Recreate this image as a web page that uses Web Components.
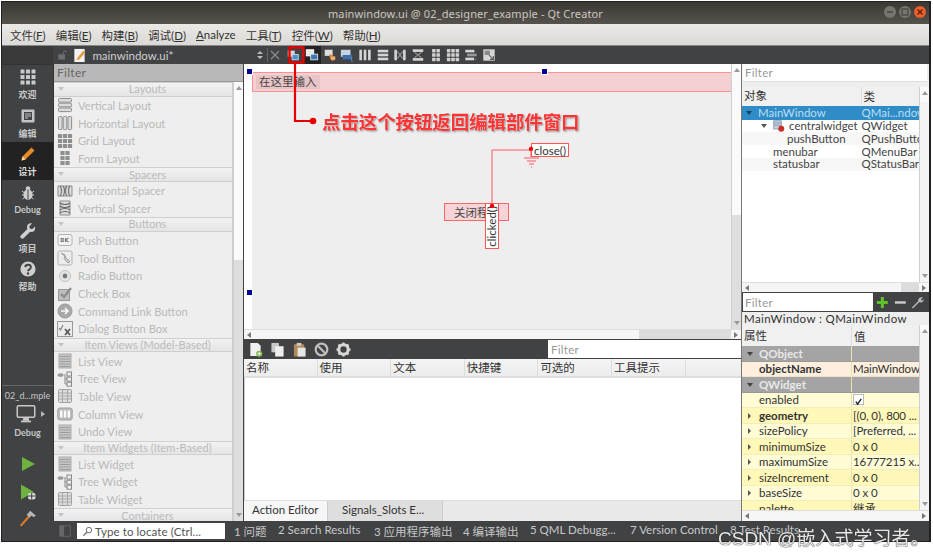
<!DOCTYPE html>
<html lang="zh"><head><meta charset="utf-8"><title>Qt Creator</title>
<style>
html,body{margin:0;padding:0;background:#fff;width:933px;height:558px;overflow:hidden}
body{font-family:"Lato","Noto Sans CJK SC",sans-serif;font-size:12px;color:#333}
</style></head><body>
<qt-window>
  <qt-titlebar slot="title">mainwindow.ui @ 02_designer_example - Qt Creator</qt-titlebar>
  <qt-menubar slot="menu"></qt-menubar>
  <qt-toolbar slot="tools"></qt-toolbar>
  <qt-modebar slot="modes"></qt-modebar>
  <widget-box slot="left"></widget-box>
  <form-editor slot="center"></form-editor>
  <action-editor slot="center"></action-editor>
  <object-inspector slot="right"></object-inspector>
  <property-editor slot="right"></property-editor>
  <qt-status slot="status"></qt-status>
  <qt-annotation slot="over"></qt-annotation>
</qt-window>
<csdn-mark>CSDN @嵌入式学习者。</csdn-mark>
<script>
const S=(vb,body)=>`<svg xmlns="http://www.w3.org/2000/svg" viewBox="0 0 ${vb} ${vb}" width="100%" height="100%">${body}</svg>`;
const g='#a9a9a9',d='#8e8e8e',l='#dcdcdc';
const dots=(xs,ys,c,r=1.6)=>xs.flatMap(x=>ys.map(y=>`<rect x="${x-r}" y="${y-r}" width="${2*r}" height="${2*r}" rx=".6" fill="${c}"/>`)).join('');
const I={
 vlayout:S(16,`<g fill="${l}" stroke="${d}"><rect x="1.5" y="1.5" width="13" height="3.6" rx="1"/><rect x="1.5" y="6.2" width="13" height="3.6" rx="1"/><rect x="1.5" y="11" width="13" height="3.6" rx="1"/></g>`),
 hlayout:S(16,`<g fill="${l}" stroke="${d}"><rect x="1.5" y="1.5" width="3.6" height="13" rx="1"/><rect x="6.2" y="1.5" width="3.6" height="13" rx="1"/><rect x="11" y="1.5" width="3.6" height="13" rx="1"/></g>`),
 grid:S(16,dots([3,8,13],[3,8,13],d,2.1)),
 form:S(16,dots([5.5,10.5],[3,8,13],d,2.1)),
 hspacer:S(16,`<path d="M1 3h14v10H1z" fill="${l}" stroke="${d}"/><path d="M3 3c2 2 2 8 0 10M6 3c2 2 2 8 0 10M10 3c-2 2-2 8 0 10M13 3c-2 2-2 8 0 10" fill="none" stroke="#777" stroke-width="1.2"/>`),
 vspacer:S(16,`<path d="M3 1h10v14H3z" fill="${l}" stroke="${d}"/><path d="M3 3c2 2 8 2 10 0M3 6c2 2 8 2 10 0M3 10c2-2 8-2 10 0M3 13c2-2 8-2 10 0" fill="none" stroke="#666" stroke-width="1.2"/>`),
 ok:S(16,`<rect x="1" y="2.5" width="14" height="11" rx="2" fill="#f2f2f2" stroke="#b2b2b2"/><path d="M4.2 6.5h2v3h-2zM8.5 6v4M11.5 6l-3 2 3 2" fill="none" stroke="#777" stroke-width="1.1"/>`),
 tool:S(16,`<rect x="1" y="1" width="14" height="14" rx="1.5" fill="#ececec" stroke="#b2b2b2"/><path d="M5 3.5l3 3-1 2 4 4.5 2-1.5-4.5-4-1-3-3-1z" fill="#cfcfcf" stroke="#888" stroke-width=".8"/>`),
 radio:S(16,`<circle cx="8" cy="8" r="5.5" fill="#e6e6e6" stroke="#c0c0c0"/><circle cx="8" cy="8" r="2.4" fill="#777"/>`),
 check:S(16,`<rect x="1.5" y="3.5" width="11" height="11" fill="#bdbdbd" stroke="#999"/><path d="M4 8l3 3 7-9" fill="none" stroke="#8c8c8c" stroke-width="2.2"/>`),
 cmd:S(16,`<circle cx="8" cy="8" r="7" fill="#a8a8a8" stroke="#999"/><path d="M4 8h6M8 5l3 3-3 3" fill="none" stroke="#fafafa" stroke-width="1.5"/>`),
 dialog:S(16,`<rect x=".5" y=".5" width="15" height="15" fill="#ececec" stroke="#999"/><path d="M2 7l1.5 2L6 4" fill="none" stroke="#888" stroke-width="1.2"/><path d="M8 8l5 6M13 8l-5 6" stroke="#555" stroke-width="1.7"/>`),
 list:S(16,`<rect x="2" y="1" width="12" height="14" fill="#c6c6c6" stroke="#aaa"/><path d="M3 3.5h10M3 6h10M3 8.5h10M3 11h10M3 13.5h10" stroke="#9c9c9c"/>`),
 tree:S(16,`<ellipse cx="3.5" cy="4" rx="3" ry="1.8" fill="#999"/><rect x="10" y="1" width="4.5" height="4" fill="#eee" stroke="#888"/><rect x="10" y="6.2" width="4.5" height="4" fill="#eee" stroke="#888"/><rect x="10" y="11.2" width="4.5" height="4" fill="#eee" stroke="#888"/><path d="M8 3v10h2M8 8h2" fill="none" stroke="#888"/>`),
 table:S(16,`<rect x="1.5" y="1.5" width="13" height="13" rx="1" fill="#ddd" stroke="#a0a0a0"/><path d="M1.5 5h13M1.5 8h13M1.5 11h13M5.5 1.5v13M10.5 1.5v13" stroke="#a8a8a8"/>`),
 column:S(16,`<rect x=".8" y="2" width="14.4" height="12" rx="2" fill="#bbb" stroke="#a0a0a0"/><rect x="3" y="4.5" width="2.4" height="7" fill="#fafafa"/><rect x="6.8" y="4.5" width="2.4" height="7" fill="#fafafa"/><rect x="10.6" y="4.5" width="2.4" height="7" fill="#fafafa"/>`),
 welcome:S(16,dots([2.5,8,13.5],[2.5,8,13.5],'#c9c9c9',2)),
 edit:S(16,`<rect x="1.5" y="1.5" width="13" height="13" rx="1" fill="#c4c4c4"/><rect x="4" y="4" width="8" height="8" fill="#444"/><path d="M5 6h6M5 8h6M5 10h3" stroke="#c4c4c4"/>`),
 design:S(16,`<path d="M1.5 14.5l1-4L11.5 1.5l3 3-9 9z" fill="#e8892a"/><path d="M1.5 14.5l1-4 3 3z" fill="#f5d4a8"/>`),
 bug:S(16,`<ellipse cx="8" cy="9.5" rx="4.5" ry="5.2" fill="#cfcfcf"/><circle cx="8" cy="3.5" r="2.2" fill="#cfcfcf"/><path d="M8 4.500v10" stroke="#404244"/><path d="M2 6l2.500 2M14 6l-2.500 2M2 10h2.500M14 10h-2.500M2.500 14l2.500-2M13.500 14l-2.500-2" stroke="#cfcfcf" stroke-width="1"/>`),
 wrench:S(16,`<path d="M15 3.6l-2.8 2.6-2.3-.6-.6-2.3L12 .4C9.500-.4 6.800 1.400 7 4.200c0 .7.200 1.200.4 1.700L1 12.200c-1 1-1 2 0 2.900s1.900.9 2.800 0l6.400-6.400c3 1 5.600-1.500 4.800-5.100z" fill="#cfcfcf"/>`),
 help:S(16,`<circle cx="8" cy="8" r="7.6" fill="#cfcfcf"/><path d="M5.200 6.200C5.400 4.600 6.600 3.800 8 3.800c1.700 0 2.900 1 2.900 2.400 0 2.100-2.900 2.200-2.900 4.100" fill="none" stroke="#404244" stroke-width="1.900"/><circle cx="8" cy="12.500" r="1.200" fill="#404244"/>`),
 monitor:S(24,`<rect x="1.500" y="2" width="21" height="14" rx="1.500" fill="#444" stroke="#c8c8c8" stroke-width="1.800"/><path d="M9 16h6l1 4H8z" fill="#c8c8c8"/><rect x="6" y="20" width="12" height="2" fill="#c8c8c8"/>`),
 play:S(16,`<path d="M2 1l13 7-13 7z" fill="#6fb33f"/>`),
 dplay:S(16,`<path d="M1 .5l13 7.500-13 7.500z" fill="#6fb33f"/><rect x="8" y="9" width="7.500" height="6.500" rx="2" fill="#dcdcdc"/><path d="M11.700 9v6.500M8 12h7.500" stroke="#404244"/>`),
 hammer:S(16,`<path d="M1.500 15L9 6.500" stroke="#d97a24" stroke-width="2"/><path d="M6.800 5L10 1.500l5 4.500-2 1-2-1-1.500 1.500z" fill="#b6b6b6"/>`),
 lock:S(16,`<rect x="3" y="7" width="9" height="7" fill="#6e6e6e"/><path d="M10 7V4.500c0-2.500 3.500-2.500 3.500 0" fill="none" stroke="#6e6e6e" stroke-width="1.300"/>`),
 doc:S(16,`<path d="M2.500 1h11v14h-11z" fill="#f2f2f2"/><path d="M5 13l1-3 6-7 2 2-6 7z" fill="#e89a3c"/>`),
 sort:S(10,`<path d="M5 1l3 3H2zM5 9L2 6h6z" fill="#bcbcbc"/>`),
 x:S(12,`<path d="M2 2l8 8M10 2l-8 8" stroke="#8f8f8f" stroke-width="1.100"/>`),
 t1:S(16,`<rect x="2" y="3" width="8" height="7" fill="#d6d6d6"/><rect x="7" y="7.500" width="7" height="6" fill="#4d8fd0" stroke="#cfdcec"/>`),
 t2:S(16,`<rect x="1.500" y="2" width="8.500" height="7" fill="#e8e8e8" stroke="#fff"/><rect x="6.500" y="7" width="8" height="6.500" fill="#3f78b5" stroke="#e0e8f0"/>`),
 t3:S(16,`<rect x="2" y="2" width="9" height="7" fill="#ddd"/><path d="M7 7l3 1 1 3 3 1-3 3-3-3z" fill="#e87a2c"/><rect x="9" y="9.500" width="5" height="4" fill="#f0b070"/>`),
 t4:S(16,`<rect x="1" y="2" width="11" height="8" fill="#c6d3e3"/><rect x="3" y="8" width="11" height="5" fill="#3f6ea8"/><path d="M13 10v5h2" stroke="#4d8fd0" fill="none"/>`),
 t5:S(16,`<rect x="1.500" y="2" width="3" height="12" fill="#d5d5d5"/><rect x="6.500" y="2" width="3" height="12" fill="#d5d5d5"/><rect x="11.500" y="2" width="3" height="12" fill="#d5d5d5"/>`),
 t6:S(16,`<rect x="2" y="2" width="12" height="3" fill="#d5d5d5"/><rect x="2" y="6.500" width="12" height="3" fill="#d5d5d5"/><rect x="2" y="11" width="12" height="3" fill="#d5d5d5"/>`),
 t7:S(16,`<rect x="1.500" y="2" width="3" height="12" fill="#d5d5d5"/><rect x="11.500" y="2" width="3" height="12" fill="#d5d5d5"/><path d="M5 4l3 4-3 4M11 4L8 8l3 4" fill="none" stroke="#999" stroke-width="1.300"/>`),
 t8:S(16,`<rect x="2" y="1.500" width="12" height="3" fill="#d5d5d5"/><rect x="2" y="11.500" width="12" height="3" fill="#d5d5d5"/><path d="M4 5l4 3 4-3M4 11l4-3 4 3" fill="none" stroke="#999" stroke-width="1.300"/>`),
 t9:S(16,dots([5.500,10.500],[3,8,13],'#d0d0d0',2)),
 t10:S(16,dots([3,8,13],[3,8,13],'#d0d0d0',2)),
 t11:S(16,`<rect x="1.500" y="2" width="10" height="3" fill="#d5d5d5"/><rect x="3.500" y="6.500" width="11" height="3" fill="#999"/><rect x="1.500" y="11" width="10" height="3" fill="#d5d5d5"/><path d="M12 3v2M14 12l-2 2" stroke="#999"/>`),
 t12:S(16,`<rect x="1.500" y="1.500" width="13" height="13" fill="#d5d5d5"/><path d="M8 8l5 5M13 9v4H9" fill="none" stroke="#555" stroke-width="1.200"/><rect x="3" y="3" width="6" height="5" fill="#888"/>`),
 a1:S(16,`<path d="M2.500 1h8l3 3v11h-11z" fill="#f0f0f0"/><circle cx="12" cy="12.500" r="3.300" fill="#7ab648"/><path d="M12 10.500v4M10 12.500h4" stroke="#fff"/>`),
 a2:S(16,`<rect x="1.500" y="1" width="8" height="10" fill="#c8c8c8"/><rect x="5.500" y="4.500" width="9" height="11" fill="#eee"/>`),
 a3:S(16,`<rect x="2" y="2.500" width="11" height="13" rx="1" fill="#b08a58"/><rect x="5" y="1" width="5" height="3" fill="#ccc"/><rect x="6" y="6" width="8.500" height="9.500" fill="#e6e6e6"/>`),
 a4:S(16,`<circle cx="8" cy="8" r="6.200" fill="none" stroke="#bdbdbd" stroke-width="2.400"/><path d="M3.800 3.800l8.400 8.400" stroke="#bdbdbd" stroke-width="2.400"/>`),
 a5:S(16,`<circle cx="8" cy="8" r="5" fill="none" stroke="#d8d8d8" stroke-width="3.200"/><path d="M8 .5v3M8 12.500v3M.5 8h3M12.500 8h3M2.700 2.700l2 2M11.300 11.300l2 2M13.300 2.700l-2 2M4.700 11.300l-2 2" stroke="#d8d8d8" stroke-width="2.400"/>`),
 sidebar:S(16,`<rect x="2" y="2" width="12" height="12" fill="none" stroke="#666"/><rect x="2" y="2" width="5" height="12" fill="#666"/>`),
 search:S(16,`<circle cx="10" cy="6" r="4" fill="none" stroke="#666" stroke-width="1.400"/><path d="M7 9l-5 5" stroke="#666" stroke-width="1.800"/>`),
 widget:S(16,`<rect x="1" y="1" width="10" height="11" fill="#c3d0de" stroke="#7b8da0"/><path d="M1 4h10M1 7h10" stroke="#7b8da0"/><circle cx="11" cy="11.500" r="4" fill="#c9302c"/>`),
 plus:S(14,`<path d="M7 1v12M1 7h12" stroke="#5fc22a" stroke-width="3.400"/>`),
 minus:S(14,`<path d="M1 7h12" stroke="#cfcfcf" stroke-width="2.600"/>`),
 tools:S(14,`<path d="M1.500 13L9 5.500" stroke="#b8b8b8" stroke-width="1.600"/><path d="M8 6c-1-3 2-5.500 5-4.500L11 4l1 1 2-1.500C14.500 6.500 11 8 8 6z" fill="#b8b8b8"/>`)
};
function def(name,css,html){
  customElements.define(name,class extends HTMLElement{
    connectedCallback(){
      if(this.shadowRoot)return;
      const r=this.attachShadow({mode:'open'});
      const a=k=>this.getAttribute(k)||'';
      r.innerHTML=`<style>${css}</style>`+(typeof html==='function'?html(a,this):html);
    }
  });
}
const cjk='"Noto Sans CJK SC"';
def('qt-window',`:host{display:block;width:930px;height:541px;margin:1px 0 0 1px;box-sizing:border-box;filter:blur(.45px);position:relative}
 .w{width:100%;height:100%;display:flex;flex-direction:column;border:1px solid #24201f;border-right-width:2px;box-sizing:border-box;background:#404244;border-bottom-width:1px}
 .mid{flex:1;display:flex;min-height:0}
 .col{display:flex;flex-direction:column;min-height:0}
 .c{width:498px;border-left:1px solid #404244;box-sizing:border-box;background:#eee}
 .r{flex:1;background:#eee;border-left:1px solid #777;min-width:0}`,
 `<div class="w"><slot name="title"></slot><slot name="menu"></slot><slot name="tools"></slot>
  <div class="mid"><slot name="modes"></slot><slot name="left"></slot><div class="col c"><slot name="center"></slot></div><div class="col r"><slot name="right"></slot></div></div>
  <slot name="status"></slot></div><slot name="over"></slot>`);
def('qt-titlebar',`:host{display:flex;height:22px;align-items:center;justify-content:center;background:linear-gradient(#3b3834,#56524c);color:#c9c7c2;font-size:11px;letter-spacing:.12px;position:relative;font-family:"Noto Sans",sans-serif}
 .b{position:absolute;right:3px;top:4px;display:flex;gap:3px}
 i{width:12px;height:12px;border-radius:50%;background:#77756f;display:flex;align-items:center;justify-content:center}
 i.x{background:#e9602c}
 i svg{width:8px;height:8px}`,
 `<slot></slot><div class="b"><i><svg viewBox="0 0 8 8"><path d="M1 4h6" stroke="#3c3a37" stroke-width="1.200"/></svg></i><i><svg viewBox="0 0 8 8"><rect x="1" y="1" width="6" height="6" fill="none" stroke="#3c3a37"/></svg></i><i class="x"><svg viewBox="0 0 8 8"><path d="M1.500 1.500l5 5M6.500 1.500l-5 5" stroke="#5a1a05" stroke-width="1.200"/></svg></i></div>`);
def('qt-menubar',`:host{display:flex;height:22px;align-items:center;gap:10px;padding:0 0 0 8px;background:linear-gradient(#ebe9e6,#dcdad6);border-bottom:1px solid #888;box-sizing:border-box;color:#333;font-size:11.5px}
 u{text-decoration:underline}`,
 `<span>文件(<u>F</u>)</span><span>编辑(<u>E</u>)</span><span>构建(<u>B</u>)</span><span>调试(<u>D</u>)</span><span><u>A</u>nalyze</span><span>工具(<u>T</u>)</span><span>控件(<u>W</u>)</span><span>帮助(<u>H</u>)</span>`);
def('tool-ico',`:host{display:flex;width:17.7px;height:18px;align-items:center;justify-content:center;flex:none}
 div{width:var(--s,14px);height:var(--s,14px)}
 :host([on]){background:#222}`,a=>`<div>${I[a('i')]}</div>`);
def('qt-toolbar',`:host{display:flex;height:18px;background:#404244;align-items:center;color:#d0d0d0;font-size:11.5px}
 .m{width:51px;height:100%;flex:none;background:#3a3a3a}
 .n{width:166px;flex:none;padding-left:4px;box-sizing:border-box}
 .sep{width:1px;height:14px;background:#666;margin:0 1px 0 1px}
 .sq{display:flex;width:12px;justify-content:center}
 .sq svg{width:10px;height:10px}
 .ic{display:flex;margin-left:3px}`,
 `<div class="m"></div><tool-ico i="lock" style="--s:12px"></tool-ico><tool-ico i="doc" style="--s:15px"></tool-ico><span class="n">mainwindow.ui*</span>
  <span class="sq">${I.sort}</span><span class="sep"></span><tool-ico i="x" style="--s:12px;width:12px"></tool-ico>
  <div class="ic"><tool-ico i="t1"></tool-ico><tool-ico i="t2" on style="margin-left:1px"></tool-ico><tool-ico i="t3"></tool-ico><tool-ico i="t4"></tool-ico><tool-ico i="t5"></tool-ico><tool-ico i="t6"></tool-ico><tool-ico i="t7"></tool-ico><tool-ico i="t8"></tool-ico><tool-ico i="t9"></tool-ico><tool-ico i="t10"></tool-ico><tool-ico i="t11"></tool-ico><tool-ico i="t12"></tool-ico></div>`);
def('mode-item',`:host{display:flex;flex-direction:column;align-items:center;height:38.400px;justify-content:center;gap:3px;padding-top:2px;box-sizing:border-box;color:#c8c8c8;font-size:9px;font-weight:700;flex:none}
 :host([on]){background:#222;color:#ddd}
 div{width:16px;height:16px}`,a=>`<div>${I[a('i')]}</div><slot></slot>`);
def('qt-modebar',`:host{display:flex;flex-direction:column;width:51px;flex:none;background:#404244;box-sizing:border-box;border-top:1px solid #333;position:relative;z-index:1}
 .sp{flex:1}
 .kit{border-top:1px solid #666;height:65px;box-sizing:border-box;display:flex;flex-direction:column;align-items:center;color:#c8c8c8;font-size:9px;padding-top:3px;line-height:13px;flex:none}
 .mon{display:flex;align-items:center;height:24px;margin:0 0 0 8px;gap:5px}.mon span{display:block;width:20px;height:22px}
 .tri{width:0;height:0;border:3px solid transparent;border-left:4px solid #bbb}
 .run{display:flex;justify-content:center;align-items:center;flex:none;height:28px}
 .run span{display:block;width:16px;height:16px}
 b{font-weight:700}`,
 `<mode-item i="welcome">欢迎</mode-item><mode-item i="edit">编辑</mode-item><mode-item i="design" on>设计</mode-item><mode-item i="bug">Debug</mode-item><mode-item i="wrench">项目</mode-item><mode-item i="help">帮助</mode-item>
  <div class="sp"></div>
  <div class="kit"><span>02_d...mple</span><div class="mon"><span>${I.monitor}</span><i class="tri"></i></div><b>Debug</b></div>
  <div class="run"><span>${I.play}</span></div>
  <div class="run"><span>${I.dplay}</span></div>
  <div class="run" style="height:24px;margin-bottom:-9px"><span style="width:18px;height:18px">${I.hammer}</span></div>`);
def('wb-cat',`:host{display:flex;height:14.500px;align-items:center;position:relative;justify-content:center;background:linear-gradient(#f2f2f2,#e4e4e4);border-top:1px solid #cfcfcf;border-bottom:1px solid #cfcfcf;box-sizing:border-box;color:#bbb;font-size:11px;padding-left:9px;overflow:hidden;flex:none;line-height:12px}
 i{position:absolute;left:4px;top:4px;border:3px solid transparent;border-top:4px solid #c4c4c4}`,`<i></i><slot></slot>`);
def('wb-item',`:host{display:flex;height:17.700px;align-items:center;color:#b9b9b9;font-size:11.200px;box-sizing:border-box;padding-left:3px;gap:5px;flex:none}
 div{width:16px;height:16px;flex:none}`,a=>`<div>${I[a('i')]}</div><slot></slot>`);
function wbHtml(){
 const c=(t,it)=>`<wb-cat>${t}</wb-cat>`+it.map(([i,n])=>`<wb-item i="${i}">${n}</wb-item>`).join('');
 return c('Layouts',[['vlayout','Vertical Layout'],['hlayout','Horizontal Layout'],['grid','Grid Layout'],['form','Form Layout']])
 +c('Spacers',[['hspacer','Horizontal Spacer'],['vspacer','Vertical Spacer']])
 +c('Buttons',[['ok','Push Button'],['tool','Tool Button'],['radio','Radio Button'],['check','Check Box'],['cmd','Command Link Button'],['dialog','Dialog Button Box']])
 +c('Item Views (Model-Based)',[['list','List View'],['tree','Tree View'],['table','Table View'],['column','Column View'],['list','Undo View']])
 +c('Item Widgets (Item-Based)',[['list','List Widget'],['tree','Tree Widget'],['table','Table Widget']])
 +c('Containers',[]);
}
def('v-scroll',`:host{display:flex;flex-direction:column;width:10px;flex:none;background:var(--b,#dedede);box-sizing:border-box;border-left:1px solid #cfcfcf}
 .t{height:var(--h,50%);background:#fafafa;display:flex;justify-content:center;padding-top:4px;box-sizing:border-box}
 .s{flex:1}.e{height:12px;display:flex;justify-content:center;padding-top:4px;box-sizing:border-box}
 i{border:3px solid transparent;border-bottom:4px solid #999;border-top:0;height:0}
 .e i{border-bottom:0;border-top:4px solid #999}`,`<div class="t"><i></i></div><div class="s"></div><div class="e"><i></i></div>`);
def('h-scroll',`:host{display:flex;height:var(--hh,10px);background:#f5f5f5;flex:none;align-items:center;box-sizing:border-box;border-top:1px solid #ddd;padding:0 3px}
 i{border:3px solid transparent;border-right:4px solid #777;border-left:0;height:0}
 .e{border-right:0;border-left:4px solid #777}
 .f{flex:1}.th{width:var(--t,92px);height:100%;background:#dcdcdc;margin:0 3px 0 0}`,`<i></i><div class="f"></div><div class="th"></div><i class="e"></i>`);
def('widget-box',`:host{display:flex;flex-direction:column;width:190px;flex:none;background:#eee;border-left:1px solid #333;box-sizing:border-box;min-height:0;overflow:hidden}
 .f{height:18px;background:#b8b8b8;color:#666;font-size:12px;display:flex;align-items:center;padding-left:3px;border-bottom:1px solid #999;box-sizing:border-box;flex:none;letter-spacing:.3px}
 .b{flex:1;display:flex;min-height:0;overflow:hidden}
 .l{flex:1;display:flex;flex-direction:column;overflow:hidden;border-right:1px solid #ccc}`,
 ()=>`<div class="f">Filter</div><div class="b"><div class="l">${wbHtml()}</div><v-scroll style="--h:178px"></v-scroll></div>`);
def('form-editor',`:host{display:flex;flex-direction:column;height:275px;flex:none;background:#fff}
 .a{flex:1;display:flex;min-height:0}
 .cv{flex:1;position:relative;background:#fff;padding:8px 0 0 8px;min-width:0}
 .in{height:100%;background:#eee;display:flex;flex-direction:column}
 .mb{height:20px;box-sizing:border-box;background:#f4d0d3;border:1px solid #ff9090;display:flex;align-items:center;padding-left:3px;font-size:11.500px;color:#444;flex:none;border-right:0}
 .mb span{background:#e9c4c7;padding:0 3px;line-height:14px}
 .h{position:absolute;width:5px;height:5px;background:#00009a;border:1px solid #fff;margin:-3px 0 0 -3px}
 .btn{position:absolute;left:200px;top:139px;width:65px;height:18px;box-sizing:border-box;background:#f4d4d6;border:1px solid #f66;font-size:11.500px;display:flex;align-items:center;padding-left:9px;color:#444}
 .sig{position:absolute;background:#fff;border:1px solid #f55;box-sizing:border-box;color:#333;font-size:11.500px;display:flex;align-items:center;justify-content:center}
 .cl{left:287px;top:79px;width:38px;height:14px}
 .ck{left:241px;top:139px;width:14px;height:46px}
 .ck span{writing-mode:vertical-rl;transform:rotate(180deg);line-height:12px}
 svg{position:absolute;left:0;top:0;width:100%;height:100%;pointer-events:none}`,
 `<div class="a"><div class="cv"><div class="in"><div class="mb"><span>在这里输入</span></div></div>
   <div class="btn">关闭程</div><div class="sig ck"><span>clicked()</span></div><div class="sig cl">close()</div>
   <svg><path d="M248 143V86H287" fill="none" stroke="#f56" stroke-width="1"/><circle cx="248" cy="142" r="2.200" fill="#e00"/><circle cx="287" cy="85" r="2.200" fill="#e00"/><path d="M287 86v7M280 94h15M283 97h9M285 100h5M287 103h1" stroke="#f56" fill="none"/></svg>
   <i class="h" style="left:5px;top:7px"></i><i class="h" style="left:300px;top:7px"></i><i class="h" style="left:5px;top:228px"></i>
  </div><v-scroll style="--h:151px;--b:#dedede"></v-scroll></div><h-scroll></h-scroll>`);
def('action-editor',`:host{display:flex;flex-direction:column;flex:1;min-height:0}
 .tb{height:20px;background:#404244;display:flex;align-items:center;flex:none}
 .tb tool-ico{width:22.200px;--s:15px}
 .fl{margin-left:auto;width:193px;height:18px;background:#fff;color:#999;font-size:11.500px;display:flex;align-items:center;padding-left:3px;box-sizing:border-box;letter-spacing:.3px}
 .hd{height:19px;background:linear-gradient(#f4f4f4,#ececec);display:grid;grid-template-columns:repeat(6,73.600px);align-items:center;border-bottom:2px solid #ddd;box-sizing:border-box;flex:none;color:#333;font-size:11.500px}
 .hd span{padding-left:2px;border-right:1px solid #ddd;line-height:17px}
 .ls{flex:1;background:#fff;border-left:1px solid #ccc}
 .tabs{height:21px;display:flex;flex:none;background:#e9e9e9;color:#333;font-size:11.500px;border-top:1px solid #ddd;box-sizing:border-box}
 .tabs span{display:flex;align-items:center;padding:0 0 3px 8px;box-sizing:border-box}
 .on{width:83px;background:#f6f6f6}.off{width:116px;background:#dedede;border-left:1px solid #ccc;border-right:1px solid #ccc;padding-left:14px !important}`,
 `<div class="tb"><tool-ico i="a1"></tool-ico><tool-ico i="a2"></tool-ico><tool-ico i="a3"></tool-ico><tool-ico i="a4"></tool-ico><tool-ico i="a5"></tool-ico><div class="fl">Filter</div></div>
  <div class="hd"><span>名称</span><span>使用</span><span>文本</span><span>快捷键</span><span>可选的</span><span>工具提示</span></div>
  <div class="ls"></div><div class="tabs"><span class="on">Action Editor</span><span class="off">Signals_Slots E...</span></div>`);
def('tree-row',`:host{display:flex;height:12.800px;align-items:center;font-size:11.500px;color:#444;flex:none;background:var(--bg,#fff);white-space:nowrap;overflow:hidden;line-height:12px}
 :host([sel]){background:#308cc6;color:#b9def5;height:13.600px}
 .a{width:119.500px;flex:none;padding-left:var(--p,0);box-sizing:border-box;display:flex;align-items:center;gap:2px}
 i{border:3px solid transparent;border-top:4px solid #555;border-bottom:0;margin-right:4px}
 :host([sel]) i{border-top-color:#16415f}
 .ic{width:12px;height:12px;margin-right:2px}`,
 a=>`<div class="a">${a('tri')?'<i></i>':''}${a('ico')?`<span class="ic">${I.widget}</span>`:''}${a('n')}</div><div>${a('v')}</div>`);
def('object-inspector',`:host{display:flex;flex-direction:column;height:228px;flex:none;background:#eee;overflow:hidden}
 .f{height:18px;margin:0 2px 0 1px;background:#fff;color:#999;font-size:11.500px;display:flex;align-items:center;padding:0 0 1px 2px;box-sizing:border-box;flex:none;letter-spacing:.3px;border-bottom:1px solid #ddd}
 .m{flex:1;display:flex;min-height:0;margin-top:5px}
 .l{flex:1;display:flex;flex-direction:column;background:#fff;min-width:0;overflow:hidden}
 .hd{display:flex;height:19px;background:#f0f0f0;align-items:center;flex:none;font-size:11.500px;color:#333;padding-bottom:1px;box-sizing:border-box}
 .hd span:first-child{width:119.500px;padding-left:2px;box-sizing:border-box;border-right:1px solid #ddd;line-height:18px}.hd span+span{padding-left:2px}`,
 `<div class="f">Filter</div><div class="m"><div class="l"><div class="hd"><span>对象</span><span>类</span></div>
 <tree-row sel tri="1" n="MainWindow" v="QMai...ndow" style="--p:4px"></tree-row>
 <tree-row tri="1" ico="1" n="centralwidget" v="QWidget" style="--p:19px"></tree-row>
 <tree-row n="pushButton" v="QPushButton" style="--bg:#f7f7f7;--p:45px"></tree-row>
 <tree-row n="menubar" v="QMenuBar" style="--p:31px"></tree-row>
 <tree-row n="statusbar" v="QStatusBar" style="--bg:#f7f7f7;--p:31px"></tree-row></div><v-scroll style="--h:15px;--b:#f4f4f4"></v-scroll></div><h-scroll style="--t:18px"></h-scroll>`);
def('prop-row',`:host{display:flex;height:15.500px;align-items:center;font-size:11.500px;color:#333;flex:none;background:var(--bg,#fffcd6);box-sizing:border-box;border-bottom:1px solid #f2eeb8;white-space:nowrap;overflow:hidden}
 :host([alt]){--bg:#fff8b8}
 :host([group]){--bg:#a4a4a4;color:#e8e8e8;font-weight:700;border-bottom-color:#999}
 :host([peach]){--bg:#fdeedd;border-bottom-color:#f5e0c8}
 :host([bold]) .a{font-weight:700}
 .a{width:110px;flex:none;padding-left:17px;box-sizing:border-box;border-right:1px solid #e7e3b0;position:relative;line-height:15px}
 .v{padding-left:1px;display:flex;align-items:center;letter-spacing:-.1px}
 i{position:absolute;left:6px;top:5px;border:3px solid transparent;border-left:3px solid #555;border-right:0}
 i.dn{left:5px;top:6px;border:3px solid transparent;border-top:4px solid #444;border-bottom:0}
 .cb{display:inline-block;width:9px;height:9px;background:#fff;border:1px solid #bbb;margin-left:0}`,
 a=>`<div class="a">${a('tri')==='r'?'<i></i>':a('tri')==='d'?'<i class="dn"></i>':''}${a('n')}</div><div class="v">${a('chk')?`<span class="cb"><svg viewBox="0 0 10 10" width="9" height="9"><path d="M2 5l2 3 4-6" stroke="#222" stroke-width="1.500" fill="none"/></svg></span>`:''}${a('v')}</div>`);
def('property-editor',`:host{display:flex;flex-direction:column;flex:1;min-height:0;background:#eee;overflow:hidden}
 .t{height:20px;background:#404244;display:flex;align-items:center;flex:none;padding-left:1px}
 .inp{width:133px;height:18px;background:#fff;color:#999;font-size:11.500px;display:flex;align-items:center;padding-left:2px;box-sizing:border-box;letter-spacing:.3px;margin-right:3px}
 .t span{width:13px;height:13px;margin-right:5px;display:block}
 .lb{height:13px;background:#eee;font-size:11.500px;color:#333;display:flex;align-items:center;padding-left:2px;flex:none;letter-spacing:.4px;line-height:13px}
 .m{flex:1;display:flex;min-height:0}
 .l{flex:1;display:flex;flex-direction:column;min-width:0;overflow:hidden;background:#fff}
 .hd{display:flex;height:21px;background:#f0f0f0;align-items:center;flex:none;font-size:11.500px;color:#333}
 .hd span:first-child{width:110px;padding-left:2px;box-sizing:border-box;border-right:1px solid #ddd;line-height:20px}.hd span+span{padding-left:2px}`,
 `<div class="t"><div class="inp">Filter</div><span>${I.plus}</span><span>${I.minus}</span><span>${I.tools}</span></div>
 <div class="lb">MainWindow : QMainWindow</div>
 <div class="m"><div class="l"><div class="hd"><span>属性</span><span>值</span></div>
 <prop-row group tri="d" n="QObject"></prop-row><prop-row peach bold n="objectName" v="MainWindow"></prop-row>
 <prop-row group tri="d" n="QWidget"></prop-row>
 <prop-row n="enabled" chk="1"></prop-row><prop-row alt bold tri="r" n="geometry" v="[(0, 0), 800 ..."></prop-row>
 <prop-row tri="r" n="sizePolicy" v="[Preferred, ..."></prop-row><prop-row alt tri="r" n="minimumSize" v="0 x 0"></prop-row>
 <prop-row tri="r" n="maximumSize" v="16777215 x..."></prop-row><prop-row alt tri="r" n="sizeIncrement" v="0 x 0"></prop-row>
 <prop-row tri="r" n="baseSize" v="0 x 0"></prop-row><prop-row alt n="palette" v="继承"></prop-row>
 </div><v-scroll style="--h:8px;--b:#f4f4f4"></v-scroll></div><h-scroll style="--t:0px;--hh:11px"></h-scroll>`);
def('qt-status',`:host{display:flex;height:20px;flex:none;background:#404244;align-items:center;color:#c8c8c8;font-size:11.500px;white-space:nowrap;overflow:hidden}
 .sb{width:24px;margin-left:51px;display:flex;justify-content:center;box-sizing:border-box}.sb span{width:14px;height:14px;display:block}
 .in{width:148px;height:16px;background:#fff;color:#555;display:flex;align-items:center;box-sizing:border-box;padding-left:5px;gap:1px;margin-right:9px;letter-spacing:.1px;flex:none}
 .in span{width:11px;height:11px;display:block;margin-right:1px}
 .t{display:flex}
 .t b{font-weight:400;flex:none}`,
 `<div class="sb"><span>${I.sidebar}</span></div><div class="in"><span>${I.search}</span>Type to locate (Ctrl...</div>
 <div class="t"><b style="width:44px">1 问题</b><b style="width:96px">2 Search Results</b><b style="width:89px">3 应用程序输出</b><b style="width:67px">4 编译输出</b><b style="width:100px">5 QML Debugg...</b><b style="width:100px">7 Version Control</b><b style="width:92px">8 Test Results</b></div>`);
def('qt-annotation',`:host{position:absolute;left:0;top:0;width:933px;height:558px;pointer-events:none;display:block;filter:blur(.2px);z-index:2}
 svg{position:absolute;left:-1px;top:-1px;width:933px;height:558px}
 .t{position:absolute;left:321px;top:108px;font-family:${cjk},sans-serif;font-size:18.400px;font-weight:700;color:#f33;white-space:nowrap;line-height:24px;text-shadow:0 0 2px #fff,1px 1px 2px rgba(0,0,0,.55)}`,
 `<svg viewBox="0 0 933 558"><rect x="289.500" y="47.500" width="14" height="15" fill="none" stroke="#e80000" stroke-width="2.400"/><path d="M295 63v58h18" fill="none" stroke="#e80000" stroke-width="2.200"/><circle cx="313" cy="121" r="3.300" fill="#e80000"/></svg>
  <div class="t">点击这个按钮返回编辑部件窗口</div>`);
def('csdn-mark',`:host{position:absolute;left:718px;top:527px;font-family:"Liberation Sans",${cjk},sans-serif;font-size:19px;line-height:24px;color:#e6e6e6;white-space:nowrap;text-shadow:0 0 1px #333,0 0 1px #333}`,`<slot></slot>`);
</script>
</body></html>
